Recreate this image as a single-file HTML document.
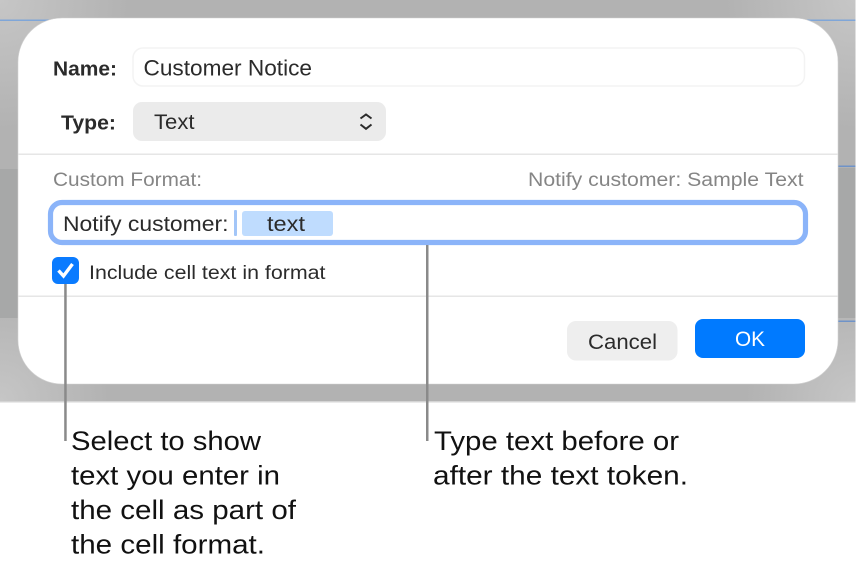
<!DOCTYPE html>
<html><head><meta charset="utf-8"><style>
html,body{margin:0;padding:0;background:#fff;width:857px;height:563px;overflow:hidden}
svg{display:block;position:absolute;left:0;top:0}
text{font-family:"Liberation Sans",sans-serif;fill:#2b2b2b}
.g{fill:#858585}
.c{fill:#111;font-size:27px}
</style></head><body>
<svg width="857" height="563" viewBox="0 0 857 563" xmlns="http://www.w3.org/2000/svg">
<defs>
<radialGradient id="a"><stop offset="0" stop-color="#c6c6c6"/><stop offset="1" stop-color="#c6c6c6" stop-opacity="0"/></radialGradient>
<clipPath id="bg"><rect x="0" y="0" width="855.500" height="401"/></clipPath>
</defs>
<rect x="0" y="0" width="855.500" height="401" fill="#b2b2b2"/>
<rect x="0" y="401" width="855.500" height="1.500" fill="#d4d4d4"/>
<g clip-path="url(#bg)">
<circle cx="0" cy="0" r="130" fill="url(#a)"/>
<circle cx="855" cy="0" r="130" fill="url(#a)"/>
<circle cx="0" cy="401" r="110" fill="url(#a)"/>
<circle cx="855" cy="401" r="110" fill="url(#a)"/>
</g>
<rect x="0" y="169" width="18" height="149" fill="#a7a8a8"/>
<rect x="838" y="168" width="17.500" height="150" fill="#a7a8a8"/>
<rect x="0" y="19.500" width="60" height="1.500" fill="#7fa6d8"/>
<rect x="800" y="19.500" width="55.500" height="1.500" fill="#7fa6d8"/>
<rect x="838" y="165.500" width="17.500" height="1.500" fill="#6f93c8"/>
<rect x="838" y="320.500" width="17.500" height="1.500" fill="#6f93c8"/>
<rect x="18" y="18" width="820" height="366" rx="44" fill="#fff" stroke="#d2d2d2" stroke-width=".6"/>
<rect x="18.500" y="153.500" width="819" height="1.500" fill="#e6e6e6"/>
<rect x="18.500" y="295.500" width="819" height="1.500" fill="#e6e6e6"/>

<text x="53" y="75.500" font-size="20" font-weight="700" textLength="64" lengthAdjust="spacingAndGlyphs">Name:</text>
<rect x="133" y="48" width="671.500" height="38" rx="10" fill="#fff" stroke="#f3f3f3" stroke-width="1.500"/>
<text x="143.500" y="75.500" font-size="22" textLength="168.500" lengthAdjust="spacingAndGlyphs">Customer Notice</text>

<text x="61" y="129.500" font-size="20" font-weight="700" textLength="55" lengthAdjust="spacingAndGlyphs">Type:</text>
<rect x="133" y="102" width="253" height="39" rx="9" fill="#ebebeb"/>
<text x="154" y="129" font-size="21.500" textLength="40.500" lengthAdjust="spacingAndGlyphs">Text</text>
<path d="M360.500 118.500L366 114.500L371.500 118.500M360.500 124.500L366 128.800L371.500 124.500" fill="none" stroke="#2b2b2b" stroke-width="2"/>

<text class="g" x="53" y="186" font-size="19" textLength="149" lengthAdjust="spacingAndGlyphs">Custom Format:</text>
<text class="g" x="528" y="186" font-size="19" textLength="275.500" lengthAdjust="spacingAndGlyphs">Notify customer: Sample Text</text>

<rect x="50.500" y="202.500" width="755" height="40" rx="11.500" fill="#fff" stroke="#8bb4f9" stroke-width="5.200"/>
<text x="63" y="231" font-size="21" textLength="165.500" lengthAdjust="spacingAndGlyphs">Notify customer:</text>
<rect x="234" y="210" width="3" height="26" rx="1" fill="#a3c6f8"/>
<rect x="242" y="211" width="91" height="25" rx="3" fill="#bfdcfe"/>
<text x="267" y="231" font-size="21" textLength="38" lengthAdjust="spacingAndGlyphs">text</text>

<rect x="52" y="257" width="27" height="27" rx="6" fill="#0a7bff"/>
<path d="M58.500 270.500L63.500 276L72.500 264" fill="none" stroke="#fff" stroke-width="3.400"/>
<text x="89" y="279" font-size="19" textLength="236.500" lengthAdjust="spacingAndGlyphs">Include cell text in format</text>

<rect x="567" y="321" width="110.500" height="39.500" rx="9" fill="#eeeeee"/>
<text x="588" y="349" font-size="21" textLength="69" lengthAdjust="spacingAndGlyphs">Cancel</text>
<rect x="695" y="319" width="110" height="39" rx="8" fill="#007aff"/>
<text x="735" y="346" font-size="21" textLength="30" lengthAdjust="spacingAndGlyphs" style="fill:#fff">OK</text>

<rect x="64.200" y="284" width="2.500" height="157" fill="#8a8a8a"/>
<rect x="426" y="245" width="2.500" height="196" fill="#8a8a8a"/>

<text class="c" x="71" y="450" textLength="190" lengthAdjust="spacingAndGlyphs">Select to show</text>
<text class="c" x="71" y="484.500" textLength="209" lengthAdjust="spacingAndGlyphs">text you enter in</text>
<text class="c" x="71" y="519" textLength="225" lengthAdjust="spacingAndGlyphs">the cell as part of</text>
<text class="c" x="71" y="553.500" textLength="194" lengthAdjust="spacingAndGlyphs">the cell format.</text>
<text class="c" x="434" y="450" textLength="245" lengthAdjust="spacingAndGlyphs">Type text before or</text>
<text class="c" x="433" y="484.500" textLength="255" lengthAdjust="spacingAndGlyphs">after the text token.</text>
</svg>
</body></html>
